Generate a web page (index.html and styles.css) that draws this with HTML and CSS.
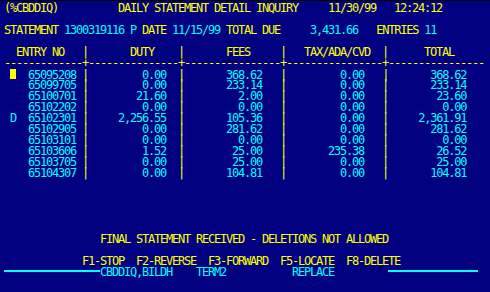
FILE: index.html
```html
<!DOCTYPE html><html><head><meta charset="utf-8">
<title>Daily Statement Detail Inquiry</title>
<link rel="stylesheet" href="styles.css">
</head>
<body>
<div class="screen">
<div class="row y">(%CBDDIQ)          DAILY STATEMENT DETAIL INQUIRY     11/30/99   12:24:12</div>
<div class="row"></div>
<div class="row y">STATEMENT <span class="c">1300319116</span> <span class="c">P</span> DATE <span class="c">11/15/99</span> TOTAL DUE     <span class="c">3,431.66</span>   ENTRIES <span class="c">11</span></div>
<div class="row"></div>
<div class="row y">  ENTRY NO   |       DUTY    |       FEES     |   TAX/ADA/CVD  |      TOTAL</div>
<div class="row y">-------------+---------------+----------------+----------------+----------------</div>
<div class="row c"> <span class="cur"></span>  65095208 <span class="y">|</span>         0.00  <span class="y">|</span>       368.62   <span class="y">|</span>         0.00   <span class="y">|</span>       368.62</div>
<div class="row c">    65099705 <span class="y">|</span>         0.00  <span class="y">|</span>       233.14   <span class="y">|</span>         0.00   <span class="y">|</span>       233.14</div>
<div class="row c">    65100701 <span class="y">|</span>        21.60  <span class="y">|</span>         2.00   <span class="y">|</span>         0.00   <span class="y">|</span>        23.60</div>
<div class="row c">    65102202 <span class="y">|</span>         0.00  <span class="y">|</span>         0.00   <span class="y">|</span>         0.00   <span class="y">|</span>         0.00</div>
<div class="row c"> D  65102301 <span class="y">|</span>     2,256.55  <span class="y">|</span>       105.36   <span class="y">|</span>         0.00   <span class="y">|</span>     2,361.91</div>
<div class="row c">    65102905 <span class="y">|</span>         0.00  <span class="y">|</span>       281.62   <span class="y">|</span>         0.00   <span class="y">|</span>       281.62</div>
<div class="row c">    65103101 <span class="y">|</span>         0.00  <span class="y">|</span>         0.00   <span class="y">|</span>         0.00   <span class="y">|</span>         0.00</div>
<div class="row c">    65103606 <span class="y">|</span>         1.52  <span class="y">|</span>        25.00   <span class="y">|</span>       235.38   <span class="y">|</span>        26.52</div>
<div class="row c">    65103705 <span class="y">|</span>         0.00  <span class="y">|</span>        25.00   <span class="y">|</span>         0.00   <span class="y">|</span>        25.00</div>
<div class="row c">    65104307 <span class="y">|</span>         0.00  <span class="y">|</span>       104.81   <span class="y">|</span>         0.00   <span class="y">|</span>       104.81</div>
<div class="row"></div>
<div class="row"></div>
<div class="row"></div>
<div class="row"></div>
<div class="row"></div>
<div class="row y">                FINAL STATEMENT RECEIVED - DELETIONS NOT ALLOWED</div>
<div class="row"></div>
<div class="row y">             F1-STOP  F2-REVERSE  F3-FORWARD  F5-LOCATE  F8-DELETE</div>
<div class="row c"><span class="rule left"></span>CBDDIQ,BILDH    TERM2           REPLACE         <span class="rule right"></span></div>
</div>
</body>
</html>
```

FILE: styles.css
```css
html, body {
  margin: 0;
  background: #000080;
}

.screen {
  height: 289px;
  padding: 2px 0 0 4px;
  border-top: 1px solid #000;
  border-bottom: 1px solid #000;
  font-family: "DejaVu Sans Mono", monospace;
  font-size: 12px;
  letter-spacing: -1.2246px;
  color: #ffff00;
}

.row {
  height: 11px;
  line-height: 11px;
  white-space: pre;
}

.y {
  color: #ffff00;
}

.c {
  color: #00ffff;
}

.cur {
  display: inline-block;
  width: 6px;
  height: 10px;
  background: #ffff00;
  vertical-align: baseline;
}

.rule {
  display: inline-block;
  height: 2px;
  background: #00ffff;
  vertical-align: 4px;
}

.rule.left {
  width: 96px;
}

.rule.right {
  width: 90px;
}
```
